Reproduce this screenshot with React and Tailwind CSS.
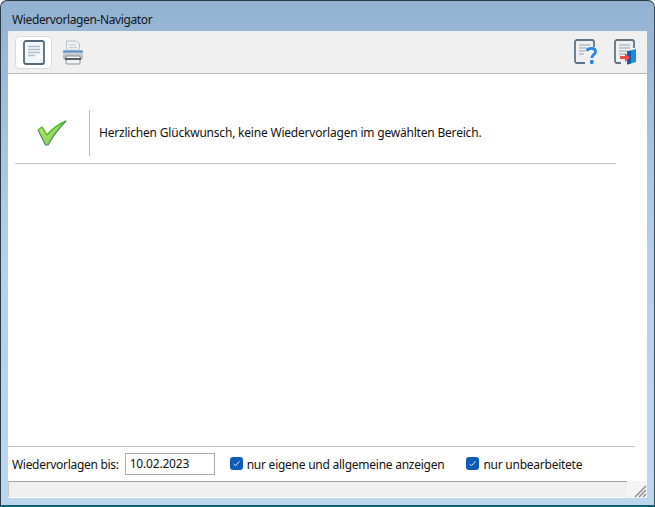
const font = { fontFamily: '"Noto Sans", sans-serif' };

const DocIcon = () => (
  <svg width="22" height="25" viewBox="0 0 22 25" fill="none">
    <rect x="1" y="1" width="20" height="23" rx="2" fill="#f4f7fa" stroke="#51687a" strokeWidth="1.800" />
    <path d="M5 6.500h12M5 9.500h12M5 12.500h12M5 15.500h7" stroke="#b3bcc5" strokeWidth="1.300" />
  </svg>
);

const PrinterIcon = () => (
  <svg width="22" height="25" viewBox="0 0 22 25" fill="none">
    <defs>
      <linearGradient id="printerBody" x1="0" y1="0" x2="0" y2="1">
        <stop offset="0" stopColor="#e6e9ec" />
        <stop offset="1" stopColor="#a4abb2" />
      </linearGradient>
    </defs>
    <path d="M4.500 1h10l3 3v6h-13z" fill="#eef0f2" stroke="#b9bec3" />
    <path d="M7 5h7M7 7.500h8" stroke="#c8ccd0" />
    <rect x="1" y="9.500" width="20" height="10" rx="2" fill="url(#printerBody)" />
    <rect x="1" y="10.500" width="20" height="2" rx="1" fill="#5588c6" />
    <rect x="4" y="16" width="14" height="8" rx="1" fill="#f2f3f5" stroke="#8a9096" />
    <rect x="3" y="18" width="16" height="2" fill="#555c62" />
  </svg>
);

const HelpIcon = () => (
  <svg width="24" height="26" viewBox="0 0 24 26" fill="none">
    <path d="M11 24H3a2 2 0 0 1-2-2V3a2 2 0 0 1 2-2h15a2 2 0 0 1 2 2v5" stroke="#5f7484" strokeWidth="1.800" />
    <path d="M5 6h11M5 9h8M5 12h6M5 15h5" stroke="#b3bcc5" strokeWidth="1.300" />
    <path d="M13 12c1-3.600 8.500-3.600 8.500.5 0 3-3.600 3-3.600 6.500" stroke="#2487e4" strokeWidth="2.800" />
    <rect x="16" y="21" width="3.600" height="4" rx="1.200" fill="#2487e4" />
  </svg>
);

const ExitIcon = () => (
  <svg width="24" height="26" viewBox="0 0 24 26" fill="none">
    <path d="M7 24H3a2 2 0 0 1-2-2V3a2 2 0 0 1 2-2h15a2 2 0 0 1 2 2v6" stroke="#5f7484" strokeWidth="1.800" />
    <path d="M5 6h11M5 9h11M5 12h9M5 15h6" stroke="#b3bcc5" strokeWidth="1.300" />
    <path d="M13 12.500l9-2.500v13l-9 2.500z" fill="#1f8ad8" />
    <path d="M13 12.500l4-1v13l-4 1z" fill="#0f5fa8" />
    <path d="M6 17h5v-3l5 4.500-5 4.500v-3H6z" fill="#ee4a3f" />
  </svg>
);

const CheckMark = () => (
  <svg width="30" height="27" viewBox="0 0 30 27" fill="none">
    <defs>
      <linearGradient id="checkFill" x1="0" y1="0" x2="1" y2="1">
        <stop offset="0" stopColor="#b4ea72" />
        <stop offset="1" stopColor="#7ccc49" />
      </linearGradient>
    </defs>
    <path d="M1 10l4-3 5 8C15 9 22 4 29 1c-6 6-13 15-18 24H8.500z" fill="url(#checkFill)" />
    <path d="M1 10l4-3 5 8C15 9 22 4 29 1" stroke="#4cbb20" strokeWidth="1.400" strokeLinejoin="round" />
    <path d="M1 10l7.500 15H11C16 16 23 7 29 1" stroke="#4a8f63" strokeWidth="1.200" strokeLinejoin="round" />
  </svg>
);

const CheckBox = ({ label }) => (
  <label className="flex items-center gap-[4px]">
    <span className="flex h-[13px] w-[13px] items-center justify-center rounded-[3px] bg-[#0b5cb5]">
      <svg width="9" height="9" viewBox="0 0 9 9" fill="none">
        <path d="M1.500 4.800l2 2 4-4.500" stroke="#dbe8f6" strokeWidth="1" />
      </svg>
    </span>
    <span className="pt-[2px] tracking-[-0.25px]">{label}</span>
  </label>
);

export default function App() {
  return (
    <div
      style={font}
      className="flex h-[507px] w-[655px] flex-col overflow-hidden rounded-t-[7px] border border-b-2 border-b-[#12606e] border-l-[#2b3a47] border-r-[#3a4c5c] border-t-[#2b3a47] bg-gradient-to-b from-[#93b2d1] via-[#b6d0ea] to-[#bcd6ee] px-[7px] pb-[7px] text-[12px] text-[#111]"
    >
      <div className="flex h-[30px] shrink-0 items-center pl-[4px] pt-[8px] tracking-[-0.38px] text-[#0c1520]">
        Wiedervorlagen-Navigator
      </div>
      <div className="flex min-h-0 flex-1 flex-col bg-white">
        {/* toolbar */}
        <div className="flex h-[43px] shrink-0 items-center justify-between border-b border-[#bdbdbd] bg-[#f0f0f0] pl-[7px] pr-[9px]">
          <div className="flex items-center gap-[10px]">
            <div className="flex h-[33px] w-[37px] items-center justify-center rounded-[4px] border border-[#d9d9d9] bg-white">
              <DocIcon />
            </div>
            <PrinterIcon />
          </div>
          <div className="flex items-center gap-[16px]">
            <HelpIcon />
            <ExitIcon />
          </div>
        </div>

        {/* message */}
        <div className="flex-1 pl-[7px] pr-[31px] pt-[36px]">
          <div className="flex h-[54px] items-stretch border-b border-[#c4c4c4] pb-[7px]">
            <div className="flex w-[75px] shrink-0 items-center justify-center border-r border-[#b8b8b8]">
              <CheckMark />
            </div>
            <div className="flex items-center pl-[9px] tracking-[-0.2px]">
              Herzlichen Glückwunsch, keine Wiedervorlagen im gewählten Bereich.
            </div>
          </div>
        </div>

        {/* filter row */}
        <div className="mr-[12px] flex h-[35px] shrink-0 items-center border-t border-[#c4c4c4] pb-[1px] pl-[4px]">
          <span className="pt-[2px] tracking-[-0.3px]">Wiedervorlagen bis:</span>
          <div className="ml-[6px] flex h-[22px] w-[90px] items-center border border-[#a9a9a9] pl-[4px] tracking-[-0.2px]">
            10.02.2023
          </div>
          <div className="ml-[15px]">
            <CheckBox label="nur eigene und allgemeine anzeigen" />
          </div>
          <div className="ml-[22px]">
            <CheckBox label="nur unbearbeitete" />
          </div>
        </div>

        {/* status bar */}
        <div className="flex h-[17px] shrink-0 bg-white">
          <div className="mb-[1px] w-[619px] border-l border-t border-[#a0a0a0] border-l-[#c8c8c8] bg-[#f0f0f0]" />
          <div className="relative flex-1 bg-[#f4f4f4]">
            <svg className="absolute bottom-0 right-0" width="14" height="14" viewBox="0 0 14 14">
              <path d="M13 2L2 13M13 6l-7 7M13 10l-3 3" stroke="#8d8d8d" strokeWidth="1.500" />
            </svg>
          </div>
        </div>
      </div>
    </div>
  );
}
